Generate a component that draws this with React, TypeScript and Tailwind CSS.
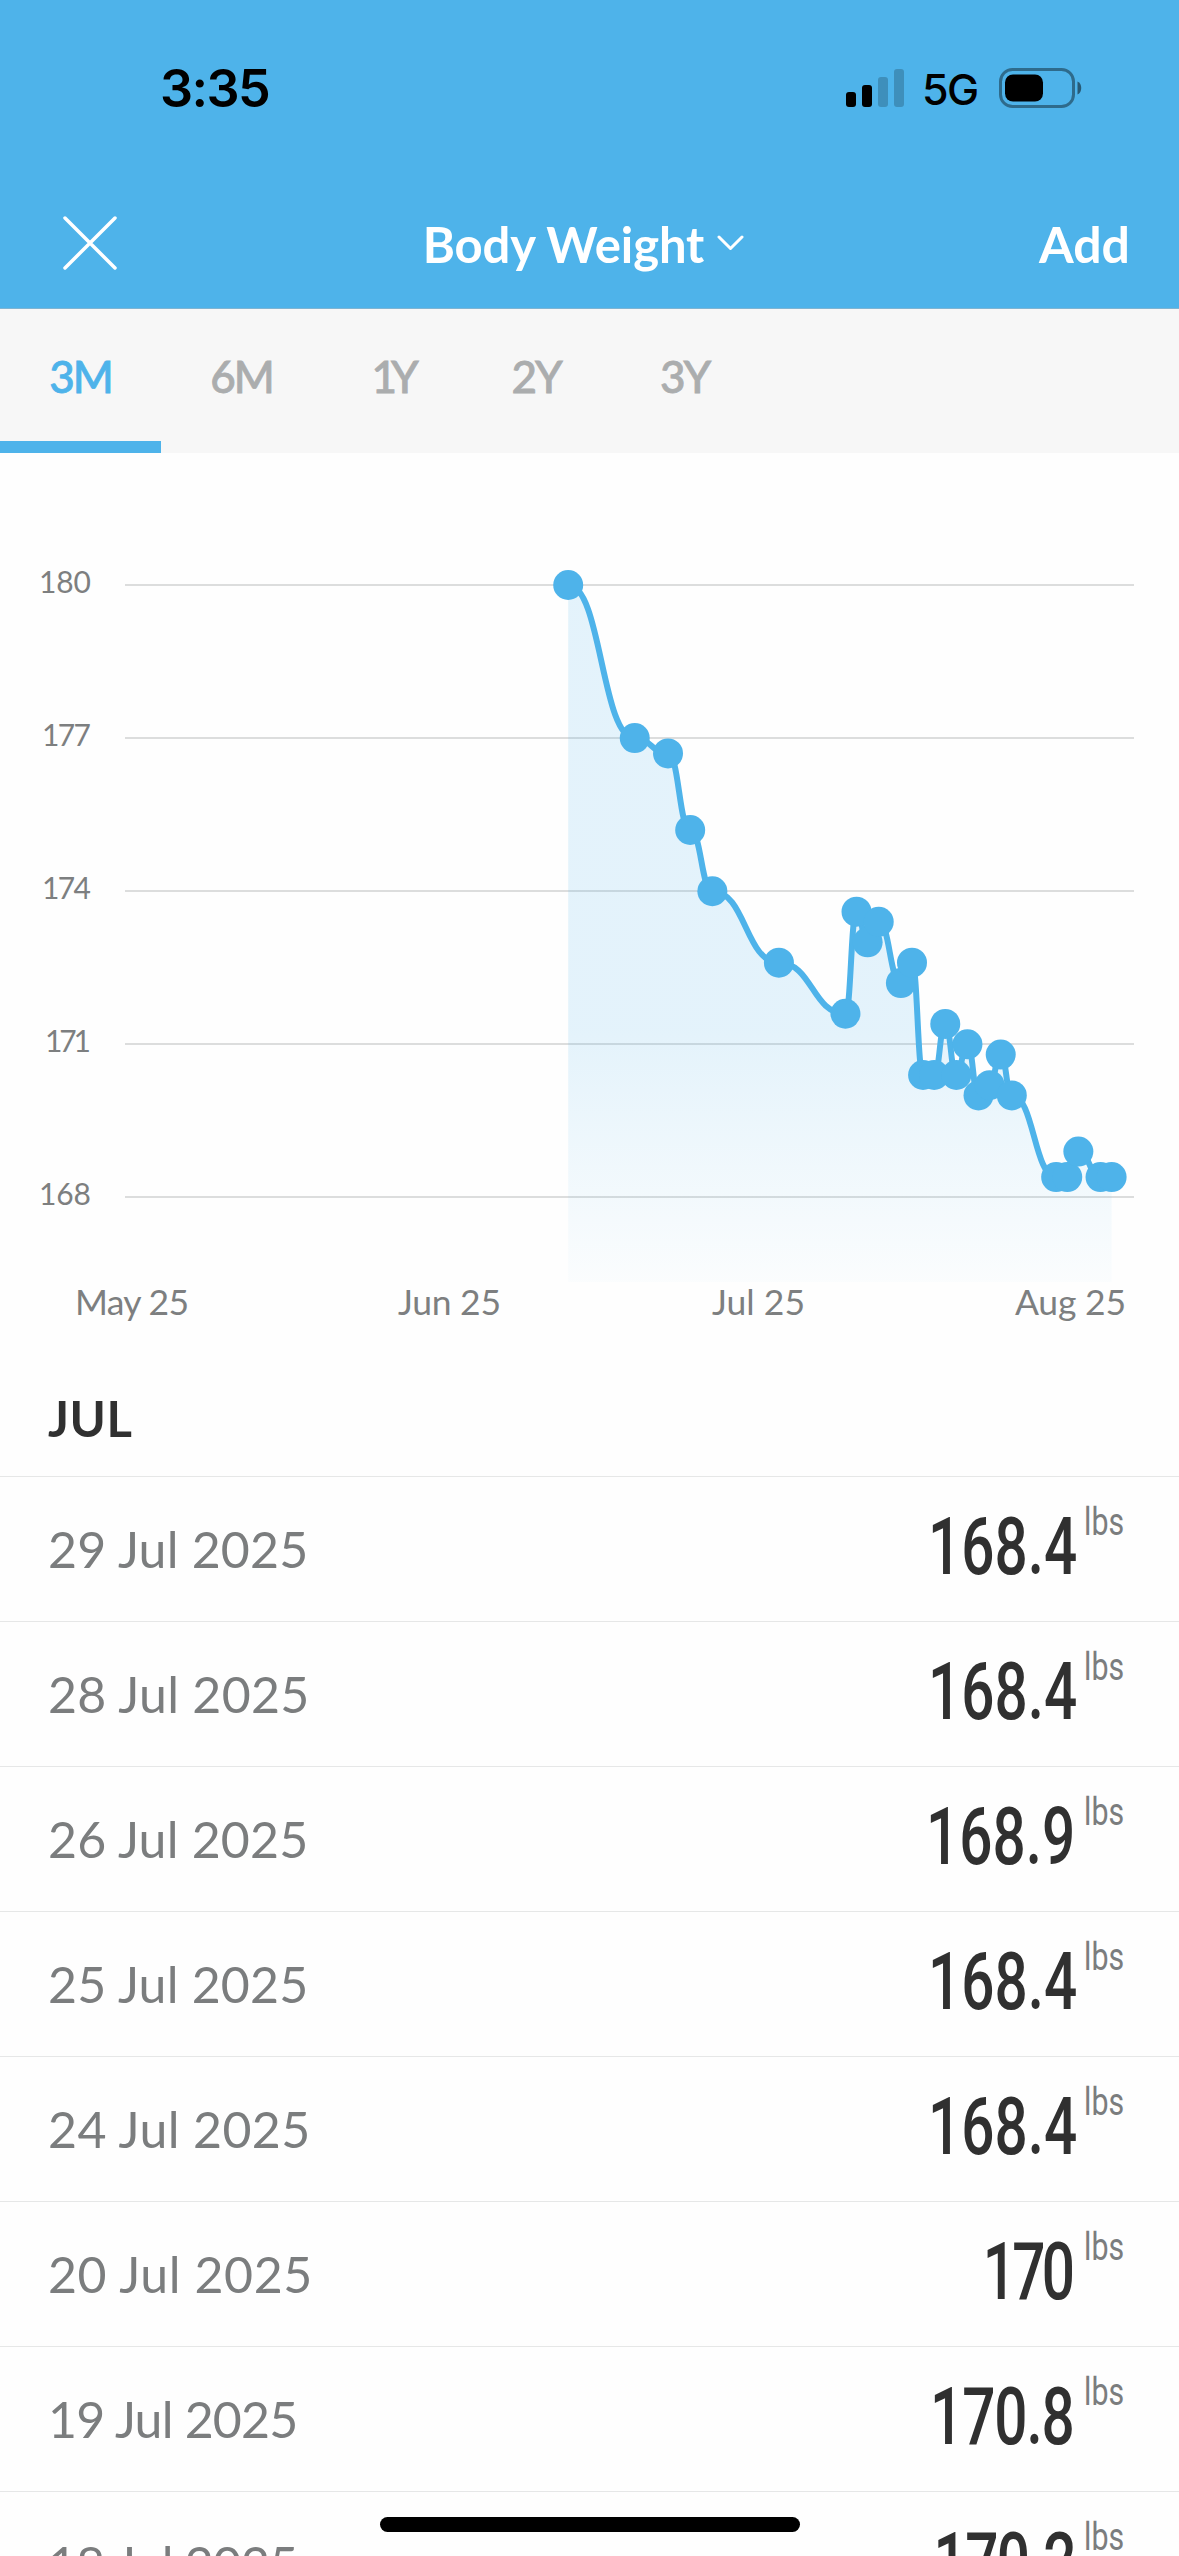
import { useState } from "react";

const ranges = [
  { label: "3M", style: "w-[161px] tracking-[-2px]" },
  { label: "6M", style: "w-[161px] tracking-[-2px]" },
  { label: "1Y", style: "w-[140px] tracking-[-6px]" },
  { label: "2Y", style: "w-[148px] tracking-[-2px]" },
  { label: "3Y", style: "w-[149px] tracking-[-2px]" },
];

// day = days since the first entry (10 Jun)
const points = [
  { day: 0, lbs: 180 },
  { day: 6, lbs: 177 },
  { day: 9, lbs: 176.7 },
  { day: 11, lbs: 175.2 },
  { day: 13, lbs: 174 },
  { day: 19, lbs: 172.6 },
  { day: 25, lbs: 171.6 },
  { day: 26, lbs: 173.6 },
  { day: 27, lbs: 173 },
  { day: 28, lbs: 173.4 },
  { day: 30, lbs: 172.2 },
  { day: 31, lbs: 172.6 },
  { day: 32, lbs: 170.4 },
  { day: 33, lbs: 170.4 },
  { day: 34, lbs: 171.4 },
  { day: 35, lbs: 170.4 },
  { day: 36, lbs: 171 },
  { day: 37, lbs: 170 },
  { day: 38, lbs: 170.2 },
  { day: 39, lbs: 170.8 },
  { day: 40, lbs: 170 },
  { day: 44, lbs: 168.4 },
  { day: 45, lbs: 168.4 },
  { day: 46, lbs: 168.9 },
  { day: 48, lbs: 168.4 },
  { day: 49, lbs: 168.4 },
];

const yTicks = [
  { value: 180, width: 52 },
  { value: 177, width: 49 },
  { value: 174, width: 49 },
  { value: 171, width: 46 },
  { value: 168, width: 52 },
];

const months = [
  { label: "May 25", x: 75, width: 114 },
  { label: "Jun 25", x: 398, width: 103 },
  { label: "Jul 25", x: 712, width: 93 },
  { label: "Aug 25", x: 1015, width: 111 },
];

const entries = [
  { date: "29 Jul 2025", lbs: "168.4", dateStyle: "tracking-[0.2px]", lbsStyle: "" },
  { date: "28 Jul 2025", lbs: "168.4", dateStyle: "tracking-[0.3px]", lbsStyle: "" },
  { date: "26 Jul 2025", lbs: "168.9", dateStyle: "tracking-[0.2px]", lbsStyle: "mr-[2px]" },
  { date: "25 Jul 2025", lbs: "168.4", dateStyle: "tracking-[0.2px]", lbsStyle: "" },
  { date: "24 Jul 2025", lbs: "168.4", dateStyle: "tracking-[0.4px]", lbsStyle: "" },
  { date: "20 Jul 2025", lbs: "170", dateStyle: "tracking-[0.6px]", lbsStyle: "mr-[6px] tracking-[-5px]" },
  { date: "19 Jul 2025", lbs: "170.8", dateStyle: "tracking-[-0.8px]", lbsStyle: "mr-[3px] tracking-[-1.5px]" },
  { date: "18 Jul 2025", lbs: "170.2", dateStyle: "tracking-[-0.8px]", lbsStyle: "mr-[2px] tracking-[-2px]" },
];

const CHART_BOTTOM = 829;
const px = (day: number) => 568.2 + day * 11.09;
const py = (lbs: number) => 132 + (180 - lbs) * 51.04;

function linePath() {
  let d = `M${px(points[0].day)},${py(points[0].lbs)}`;
  for (let i = 1; i < points.length; i++) {
    const x0 = px(points[i - 1].day);
    const y0 = py(points[i - 1].lbs);
    const x1 = px(points[i].day);
    const y1 = py(points[i].lbs);
    const mid = (x0 + x1) / 2;
    d += ` C${mid},${y0} ${mid},${y1} ${x1},${y1}`;
  }
  return d;
}

function StatusBar() {
  return (
    <div className="flex h-[176px] items-start justify-between pl-[160px] pr-[97px] pt-[56px] text-black">
      <span className="pt-px font-['Inter'] text-[52px] font-semibold leading-[64px] tracking-[-1.6px]">3:35</span>
      <div className="flex h-[64px] items-center">
        <svg width="58" height="38" viewBox="0 0 58 38">
          <rect x="0" y="23" width="10" height="15" rx="3" />
          <rect x="16" y="16" width="10" height="22" rx="3" />
          <rect x="32" y="8" width="10" height="30" rx="3" opacity="0.2" />
          <rect x="48" y="0" width="10" height="38" rx="3" opacity="0.2" />
        </svg>
        <span className="ml-[18px] mt-[3px] w-[58px] font-['Inter'] text-[43px] font-medium leading-none tracking-[-1.5px]">5G</span>
        <svg className="ml-[19px]" width="83" height="40" viewBox="0 0 83 40">
          <rect x="1.5" y="1.5" width="73" height="37" rx="12" fill="none" stroke="#000" strokeOpacity="0.4" strokeWidth="3" />
          <rect x="6" y="6.5" width="38" height="27" rx="8" />
          <path d="M78.5 13.5C83.5 15.5 83.5 24.5 78.5 26.5Z" fillOpacity="0.5" />
        </svg>
      </div>
    </div>
  );
}

function Header() {
  return (
    <header className="h-[309px] border-b border-[#7fb4d2] bg-[#4eb3ea]">
      <StatusBar />
      <div className="grid h-[132px] grid-cols-[1fr_auto_1fr] items-start pl-[63px] pr-[49px] pt-[38px] text-white">
        <button className="w-[54px] pt-[2px]">
          <svg width="54" height="54" viewBox="0 0 54 54" fill="none" stroke="currentColor" strokeWidth="3.5" strokeLinecap="round">
            <path d="M2 2L52 52M52 2L2 52" />
          </svg>
        </button>
        <button className="-ml-[26px] flex items-start">
          <span className="text-[49px] font-bold leading-[60px] tracking-[-0.1px]">Body Weight</span>
          <svg className="ml-[13px] mt-[21px]" width="27" height="16" viewBox="0 0 27 16" fill="none" stroke="currentColor" strokeWidth="3" strokeLinecap="round" strokeLinejoin="round">
            <path d="M2 2L13.5 13.5L25 2" />
          </svg>
        </button>
        <button className="justify-self-end text-[50px] font-bold leading-[60px]">Add</button>
      </div>
    </header>
  );
}

function Chart() {
  const line = linePath();
  return (
    <svg className="block" width="1179" height="890" viewBox="0 0 1179 890">
      <defs>
        <linearGradient id="fade" gradientUnits="userSpaceOnUse" x1="0" y1="132" x2="0" y2={CHART_BOTTOM}>
          <stop offset="0" stopColor="#4eb3ea" stopOpacity="0.15" />
          <stop offset="0.64" stopColor="#4eb3ea" stopOpacity="0.15" />
          <stop offset="1" stopColor="#4eb3ea" stopOpacity="0.02" />
        </linearGradient>
      </defs>
      {yTicks.map((t) => (
        <g key={t.value}>
          <rect x="125" y={Math.round(py(t.value)) - 1} width="1009" height="2" fill="#dcdddd" />
          <text x={91 - t.width} y={Math.round(py(t.value)) + 8} fontSize="30" fill="#7d7f80" textLength={t.width}>
            {t.value}
          </text>
        </g>
      ))}
      <path d={`${line} V${CHART_BOTTOM} H${px(0)} Z`} fill="url(#fade)" />
      <path d={line} fill="none" stroke="#4eb3ea" strokeWidth="6" strokeLinejoin="round" />
      {points.map((p) => (
        <circle key={p.day} cx={px(p.day)} cy={py(p.lbs)} r="15" fill="#4eb3ea" />
      ))}
      {months.map((m) => (
        <text key={m.label} x={m.x} y="862" fontSize="35.5" fill="#7d7f80" textLength={m.width}>
          {m.label}
        </text>
      ))}
    </svg>
  );
}

export default function App() {
  const [range, setRange] = useState("3M");

  return (
    <div className="relative h-[2556px] w-[1179px] overflow-hidden bg-[#fefefe] font-['Lato',sans-serif]">
      <Header />

      <nav className="flex h-[144px] bg-[#f7f7f7]">
        {ranges.map((r) => (
          <button
            key={r.label}
            onClick={() => setRange(r.label)}
            className={`${r.style} flex flex-col items-center justify-between border-b-[12px] pt-[40px] text-[44px] font-medium leading-[54px] [-webkit-text-stroke:0.8px] ${
              range === r.label ? "border-[#4eb3ea] text-[#4eb3ea]" : "border-transparent text-[#abadae]"
            }`}
          >
            {r.label}
          </button>
        ))}
      </nav>

      <Chart />

      <h2 className="h-[133px] pl-[48px] pt-[45px] text-[49px] font-bold leading-[60px] tracking-[0.5px] text-[#303030]">JUL</h2>

      <ul>
        {entries.map((e) => (
          <li key={e.date} className="flex h-[145px] items-start justify-between border-t border-[#e6e7e7] pl-[48px] pr-[56px]">
            <span className={`${e.dateStyle} pt-[42px] text-[50px] leading-[60px] text-[#7b7d7e]`}>{e.date}</span>
            <div className="flex items-start font-['Roboto']">
              <span className={`${e.lbsStyle} origin-right scale-x-[0.73] pt-[22px] text-[80px] font-medium leading-[96px] text-[#303030]`}>
                {e.lbs}
              </span>
              <span className="ml-[7px] w-[39px] origin-left scale-x-[0.8] pt-[23px] text-[38px] leading-[44px] text-[#7b7d7e]">lbs</span>
            </div>
          </li>
        ))}
      </ul>

      <div className="absolute bottom-[24px] left-[380px] h-[15px] w-[420px] rounded-full bg-black" />
    </div>
  );
}
